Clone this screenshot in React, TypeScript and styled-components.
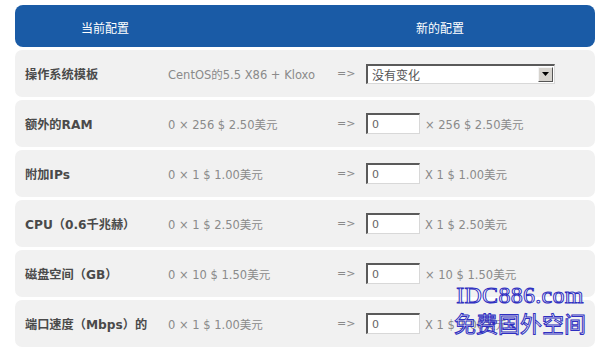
import React from "react";
import styled, { createGlobalStyle } from "styled-components";

type Row = {
  label: string;
  current: string;
  unit?: string;
  select?: string;
};

const rows: Row[] = [
  { label: "操作系统模板", current: "CentOS的5.5 X86 + Kloxo", select: "没有变化" },
  { label: "额外的RAM", current: "0 × 256 $ 2.50美元", unit: "× 256 $ 2.50美元" },
  { label: "附加IPs", current: "0 × 1 $ 1.00美元", unit: "X 1 $ 1.00美元" },
  { label: "CPU（0.6千兆赫）", current: "0 × 1 $ 2.50美元", unit: "X 1 $ 2.50美元" },
  { label: "磁盘空间（GB）", current: "0 × 10 $ 1.50美元", unit: "× 10 $ 1.50美元" },
  { label: "端口速度（Mbps）的", current: "0 × 1 $ 1.00美元", unit: "X 1 $ 1.00美元" },
];

const App: React.FC = () => {
  return (
    <Page>
      <GlobalStyle />
      <Header>
        <HeadCell $width={180}>当前配置</HeadCell>
        <HeadCell $width={310}>新的配置</HeadCell>
      </Header>
      {rows.map((row) => (
        <OptionRow key={row.label}>
          <Label>{row.label}</Label>
          <Current>{row.current}</Current>
          <Arrow>=&gt;</Arrow>
          {row.select ? (
            <SelectBox>
              <SelectText>{row.select}</SelectText>
              <DropButton>
                <svg width="7" height="4" viewBox="0 0 7 4">
                  <path d="M0 0h7L3.5 4z" fill="#000" />
                </svg>
              </DropButton>
            </SelectBox>
          ) : (
            <>
              <QtyInput type="text" defaultValue="0" readOnly />
              <Unit>{row.unit}</Unit>
            </>
          )}
        </OptionRow>
      ))}
      <Watermark>
        <MarkLatin>IDC886.com</MarkLatin>
        <MarkCjk>免费国外空间</MarkCjk>
      </Watermark>
    </Page>
  );
};

const GlobalStyle = createGlobalStyle`
  html, body {
    margin: 0;
    padding: 0;
    background: #ffffff;
  }
`;

const Page = styled.div`
  position: relative;
  width: 600px;
  height: 348px;
  overflow: hidden;
  padding: 5px 5px 0 15px;
  box-sizing: border-box;
  display: flex;
  flex-direction: column;
  gap: 3px;
  font-family: "DejaVu Sans", "Noto Sans CJK SC", sans-serif;
`;

const Header = styled.div`
  height: 42px;
  background: #1a5ba6;
  border-radius: 8px;
  display: flex;
  justify-content: space-between;
  align-items: center;
  color: #ffffff;
  font-family: "Noto Sans CJK SC", sans-serif;
  font-size: 12px;
`;

const HeadCell = styled.div<{ $width: number }>`
  width: ${(p) => p.$width}px;
  text-align: center;
  padding-top: 2px;
`;

const OptionRow = styled.div`
  height: 47px;
  flex: none;
  background: #f1f1f1;
  border-radius: 7px;
  display: flex;
  align-items: center;
  padding-left: 10px;
  font-size: 11.5px;
  color: #8a8a8a;
`;

const Label = styled.div`
  width: 143px;
  font-family: "DejaVu Sans", "Noto Sans CJK SC", sans-serif;
  font-weight: bold;
  font-size: 12.2px;
  color: #4a4a4a;
  white-space: nowrap;
`;

const Current = styled.div`
  width: 169px;
  white-space: nowrap;
`;

const Arrow = styled.div`
  width: 29px;
  font-size: 11px;
  color: #8a8a8a;
`;

const SelectBox = styled.div`
  width: 189px;
  height: 20px;
  box-sizing: border-box;
  background: #ffffff;
  border-top: 2px solid #5a5a5a;
  border-left: 2px solid #5a5a5a;
  border-right: 1px solid #d8d8d8;
  border-bottom: 1px solid #d8d8d8;
  display: flex;
  align-items: center;
  justify-content: space-between;
`;

const SelectText = styled.span`
  padding-left: 4px;
  font-family: "Noto Sans CJK SC", sans-serif;
  font-size: 12px;
  color: #555555;
`;

const DropButton = styled.span`
  width: 15px;
  height: 15px;
  margin-right: 1px;
  box-sizing: border-box;
  background: #d6d3ce;
  border-top: 1px solid #f4f4f4;
  border-left: 1px solid #f4f4f4;
  border-right: 1px solid #555555;
  border-bottom: 1px solid #555555;
  display: flex;
  align-items: center;
  justify-content: center;
`;

const QtyInput = styled.input`
  width: 54px;
  height: 21px;
  box-sizing: border-box;
  margin: 0 5px 0 0;
  padding: 0 4px;
  border-top: 2px solid #5a5a5a;
  border-left: 2px solid #5a5a5a;
  border-right: 1px solid #d8d8d8;
  border-bottom: 1px solid #d8d8d8;
  background: #ffffff;
  font-family: "DejaVu Sans", sans-serif;
  font-size: 11px;
  color: #666666;
  outline: none;
`;

const Unit = styled.span`
  white-space: nowrap;
`;

const Watermark = styled.div`
  position: absolute;
  left: 454px;
  top: 282px;
  display: flex;
  flex-direction: column;
  align-items: center;
  pointer-events: none;
`;

const MarkLatin = styled.div`
  font-family: "Liberation Serif", serif;
  font-size: 24px;
  line-height: 26px;
  color: #ffffff;
  -webkit-text-stroke: 1px #2f2fc0;
  letter-spacing: 0.3px;
`;

const MarkCjk = styled.div`
  font-family: "Noto Sans CJK SC", sans-serif;
  font-size: 22px;
  line-height: 28px;
  color: rgba(255, 255, 255, 0.6);
  -webkit-text-stroke: 1px #2f2fc0;
`;

export default App;
